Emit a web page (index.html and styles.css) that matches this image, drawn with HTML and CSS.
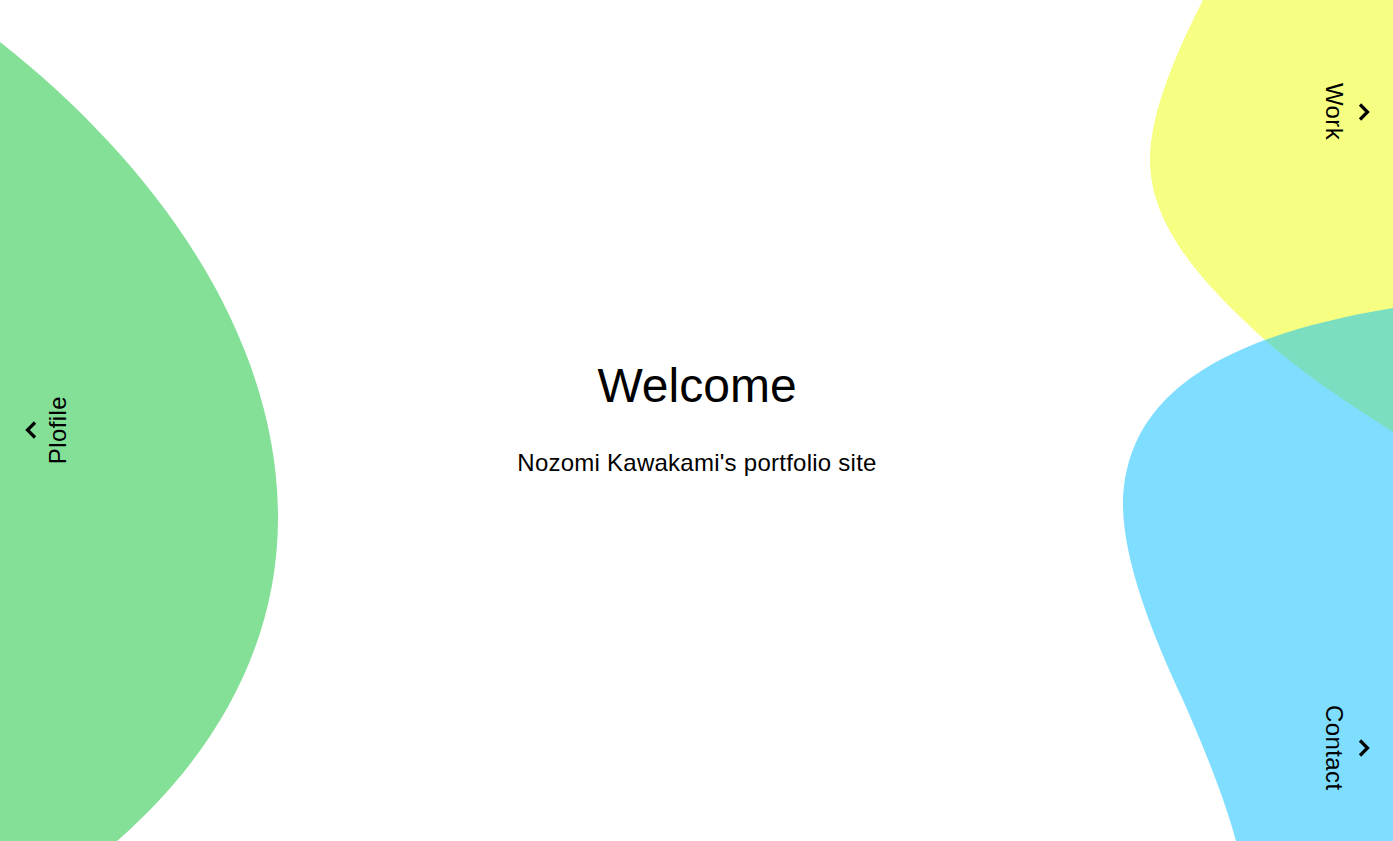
FILE: index.html
```html
<!DOCTYPE html>
<html lang="en">
<head>
<meta charset="utf-8">
<title>Nozomi Kawakami's portfolio site</title>
<link rel="stylesheet" href="styles.css">
</head>
<body>
<svg class="blobs" viewBox="0 0 1393 841" preserveAspectRatio="none" aria-hidden="true">
  <path class="blob-green" d="M0,42 C150,160 278,330 278,518 C278,650 210,760 117,841 L0,841 Z"/>
  <path class="blob-yellow" d="M1203,0 C1180,45 1150,110 1150,160 C1150,230 1210,290 1265,340 C1310,380 1360,410 1393,432 L1393,0 Z"/>
  <path class="blob-blue" d="M1393,308 C1230,335 1123,390 1123,507 C1124,560 1150,630 1183,700 C1205,750 1225,800 1236,841 L1393,841 Z"/>
</svg>
<div class="page">
  <nav class="side side-left">
    <a class="nav-link" href="#profile">
      <svg class="chev" viewBox="0 0 12 18"><polyline points="10,1.5 2.5,9 10,16.5"/></svg>
      <span class="vtext vtext-up">Plofile</span>
    </a>
  </nav>
  <main class="hero">
    <h1 class="hero-title">Welcome</h1>
    <p class="hero-sub">Nozomi Kawakami's portfolio site</p>
  </main>
  <nav class="side side-right">
    <a class="nav-link" href="#work">
      <span class="vtext">Work</span>
      <svg class="chev" viewBox="0 0 12 18"><polyline points="2,1.5 9.5,9 2,16.5"/></svg>
    </a>
    <a class="nav-link" href="#contact">
      <span class="vtext">Contact</span>
      <svg class="chev" viewBox="0 0 12 18"><polyline points="2,1.5 9.5,9 2,16.5"/></svg>
    </a>
  </nav>
</div>
</body>
</html>
```
FILE: styles.css
```css
* { box-sizing: border-box; }
html, body {
  margin: 0;
  padding: 0;
  height: 100%;
  background: #ffffff;
  overflow: hidden;
}
body {
  font-family: "Liberation Sans", Arial, sans-serif;
  color: #000;
  position: relative;
}
.blobs {
  position: absolute;
  left: 0;
  top: 0;
  width: 100%;
  height: 100%;
  z-index: 0;
}
.blob-green { fill: #84df97; }
.blob-yellow { fill: #f7ff82; }
.blob-blue { fill: #00bdff; fill-opacity: 0.5; }

.page {
  position: relative;
  z-index: 1;
  height: 100vh;
  display: grid;
  grid-template-columns: 100px 1fr 100px;
}
.side {
  display: flex;
  flex-direction: column;
}
.side-left {
  justify-content: center;
  align-items: flex-start;
  padding-left: 25px;
  padding-top: 20px;
}
.side-right {
  justify-content: space-between;
  align-items: flex-end;
  padding: 83px 23px 50px 0;
}
.nav-link {
  display: flex;
  align-items: center;
  gap: 12px;
  color: #000;
  text-decoration: none;
}
.side-left .nav-link {
  gap: 9px;
}
.vtext {
  writing-mode: vertical-rl;
  font-size: 24px;
  line-height: 24px;
  letter-spacing: 0.4px;
}
.vtext-up {
  transform: rotate(180deg);
}
.chev {
  width: 12px;
  height: 18px;
  flex: none;
}
.chev polyline {
  fill: none;
  stroke: #000;
  stroke-width: 3.2;
  stroke-linecap: butt;
  stroke-linejoin: miter;
}
.hero {
  display: flex;
  flex-direction: column;
  align-items: center;
  justify-content: center;
  gap: 33px;
  padding-bottom: 5px;
  padding-left: 1px;
}
.hero-title {
  margin: 0;
  font-size: 48px;
  line-height: 56px;
  font-weight: 400;
}
.hero-sub {
  margin: 0;
  font-size: 24px;
  line-height: 32px;
  letter-spacing: 0.25px;
}
```
